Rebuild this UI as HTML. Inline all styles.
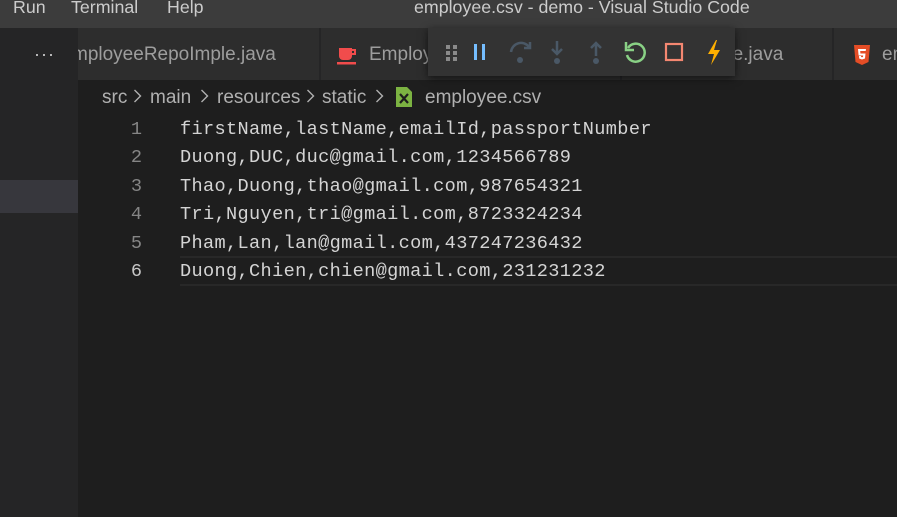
<!DOCTYPE html>
<html><head><meta charset="utf-8"><style>
*{margin:0;padding:0;box-sizing:border-box}
body{width:897px;height:517px;overflow:hidden;background:#1e1e1e;font-family:"Liberation Sans",sans-serif;position:relative}
.title{position:absolute;left:0;top:0;width:897px;height:28px;background:#3c3c3c;color:#ccc;font-size:17.8px}
.title span{position:absolute;top:-3px;white-space:nowrap}
.side{position:absolute;left:0;top:28px;width:78px;height:489px;background:#252526}
.sel{position:absolute;left:0;top:180px;width:78px;height:33px;background:#37373d}
.tabs{position:absolute;left:78px;top:28px;width:819px;height:52px;background:#252526}
.tab{position:absolute;top:0;height:52px;background:#2d2d2d;color:#9d9d9d;font-size:19px;border-right:1px solid #252526;overflow:hidden;white-space:nowrap}
.tab span,.tab svg{position:absolute}
.dbg{position:absolute;left:428px;top:28px;width:307px;height:48px;background:#333333;box-shadow:0 2px 8px rgba(0,0,0,.6)}
.c{position:absolute;top:87px;color:#b0b0b0;font-size:19px;white-space:nowrap}
.ch{position:absolute;top:88px}
.code{position:absolute;left:180px;top:116px;font-family:"Liberation Mono",monospace;font-size:18.6px;color:#d4d4d4;line-height:28.4px;white-space:pre;letter-spacing:.35px}
.ln{position:absolute;left:110px;top:116px;width:32px;text-align:right;font-family:"Liberation Mono",monospace;font-size:18.6px;color:#858585;line-height:28.4px}
.cur{position:absolute;left:180px;top:256px;width:717px;height:30px;border-top:2px solid #282828;border-bottom:2px solid #282828}
</style></head><body>
<div class="title"><span style="left:13px">Run</span><span style="left:71px">Terminal</span><span style="left:167px">Help</span><span style="left:414px">employee.csv - demo - Visual Studio Code</span></div>
<div class="side"></div><div class="sel"></div>
<div style="position:absolute;left:34px;top:44px;color:#ccc;font-size:18px;letter-spacing:1px">···</div>
<div class="tabs">
<div class="tab" style="left:0;width:242px"><span style="left:-6px;top:16px">mployeeRepoImple.java</span></div>
<div class="tab" style="left:243px;width:300px"><svg style="left:16px;top:17px" width="22" height="20" viewBox="0 0 22 20"><path d="M2 3h13v8a4 4 0 0 1-4 4H6a4 4 0 0 1-4-4z" fill="#f14c4c"/><path d="M15 5h3v4h-3" fill="none" stroke="#f14c4c" stroke-width="2"/><rect x="0" y="17" width="19" height="2.5" fill="#f14c4c"/></svg><span style="left:48px;top:16px">Employ</span></div>
<div class="tab" style="left:544px;width:211px"><span style="left:100px;top:16px">ee.java</span></div>
<div class="tab" style="left:756px;width:80px"><svg style="left:20px;top:17px" width="16" height="20" viewBox="0 0 16 20"><path d="M0 0h16l-1.5 17L8 20l-6.5-3z" fill="#e44d26"/><path d="M4 4h8l-.3 2H6.2l.2 2.5h5.1l-.5 5L8 14.5 5.2 13.5 5 11h2l.1 1 .9.3 1-.3.2-1.5H4.6z" fill="#fff"/></svg><span style="left:48px;top:16px">em</span></div>
</div>
<div class="dbg">
<svg width="307" height="48" viewBox="0 0 307 48">
<g fill="#8a8a8a"><rect x="18" y="17" width="4" height="4"/><rect x="25" y="17" width="4" height="4"/><rect x="18" y="23" width="4" height="4"/><rect x="25" y="23" width="4" height="4"/><rect x="18" y="29" width="4" height="4"/><rect x="25" y="29" width="4" height="4"/></g>
<rect x="46" y="16" width="3" height="16" fill="#75beff"/><rect x="54" y="16" width="3" height="16" fill="#75beff"/>
<g stroke="#4a5866" stroke-width="2.5" fill="none"><path d="M83 24a10 10 0 0 1 18-5"/><path d="M102 14v6h-6"/><path d="M129 13v13M124 21l5 5 5-5"/><path d="M168 28V15M163 20l5-5 5 5"/></g>
<g fill="#4a5866"><circle cx="92" cy="32" r="3"/><circle cx="129" cy="33" r="3"/><circle cx="168" cy="33" r="3"/></g>
<path d="M200 20a9 9 0 1 1-1 7" stroke="#89d185" stroke-width="2.5" fill="none"/><path d="M198 14v8h8" stroke="#89d185" stroke-width="2.5" fill="none"/>
<rect x="238" y="16" width="16" height="16" stroke="#f48771" stroke-width="2.2" fill="none"/>
<path d="M288 12l-8 14h6l-3 11 9-15h-6l3-10z" fill="#ffb000"/>
</svg></div>
<span class="c" style="left:102px">src</span>
<svg class="ch" style="left:133px" width="9" height="16"><path d="M1.5 2l6 6-6 6" stroke="#b0b0b0" stroke-width="1.4" fill="none"/></svg>
<span class="c" style="left:150px">main</span>
<svg class="ch" style="left:200px" width="9" height="16"><path d="M1.5 2l6 6-6 6" stroke="#b0b0b0" stroke-width="1.4" fill="none"/></svg>
<span class="c" style="left:217px">resources</span>
<svg class="ch" style="left:306px" width="9" height="16"><path d="M1.5 2l6 6-6 6" stroke="#b0b0b0" stroke-width="1.4" fill="none"/></svg>
<span class="c" style="left:322px">static</span>
<svg class="ch" style="left:375px" width="9" height="16"><path d="M1.5 2l6 6-6 6" stroke="#b0b0b0" stroke-width="1.4" fill="none"/></svg>
<div style="position:absolute;left:396px;top:87px"><svg width="16" height="20" viewBox="0 0 16 20"><path d="M0 0h11l5 5v15H0z" fill="#7cb342"/><path d="M4 7l8 9M12 7l-8 9" stroke="#1e1e1e" stroke-width="2.2"/></svg></div>
<span class="c" style="left:425px">employee.csv</span>
<div class="cur"></div>
<div class="ln">1<br>2<br>3<br>4<br>5<br><span style="color:#c6c6c6">6</span></div>
<div class="code">firstName,lastName,emailId,passportNumber
Duong,DUC,duc@gmail.com,1234566789
Thao,Duong,thao@gmail.com,987654321
Tri,Nguyen,tri@gmail.com,8723324234
Pham,Lan,lan@gmail.com,437247236432
Duong,Chien,chien@gmail.com,231231232</div>
</body></html>
